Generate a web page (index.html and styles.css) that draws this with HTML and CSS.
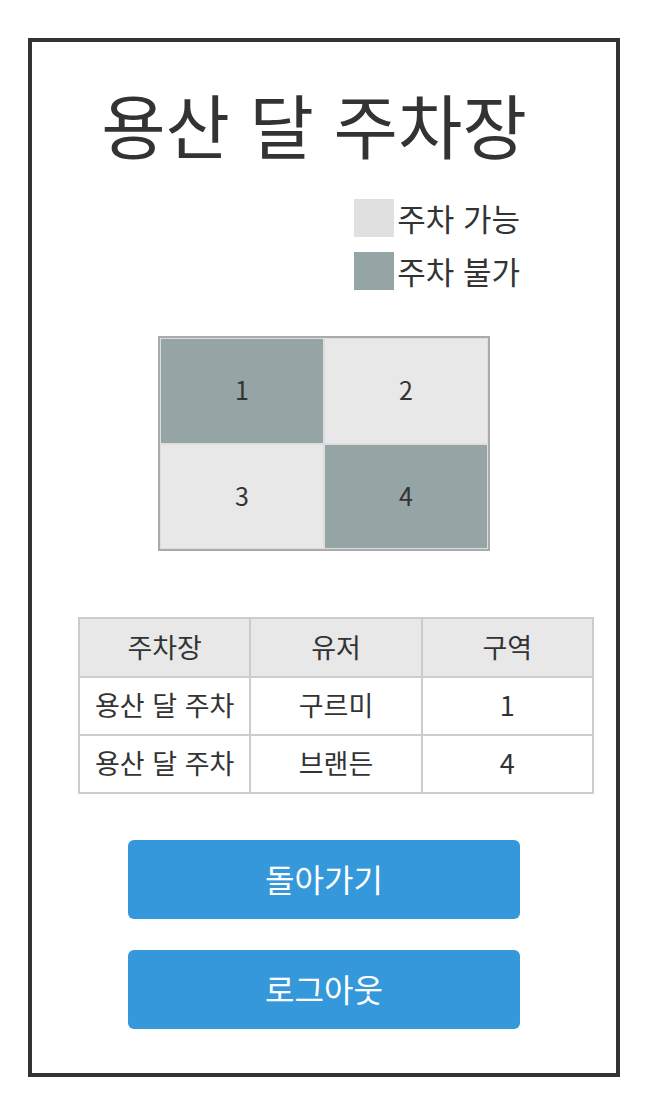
FILE: index.html
```html
<!DOCTYPE html>
<html lang="ko">
<head>
    <meta charset="UTF-8">
    <meta name="viewport" content="width=device-width, initial-scale=1.0">
    <title>용산 달 주차장</title>
    <link rel="stylesheet" href="styles.css">
</head>
<body>
    <div class="frame">
        <h1 class="title">용산 달 주차장</h1>

        <div class="legend">
            <div class="legend-item"><span class="swatch free"></span>주차 가능</div>
            <div class="legend-item"><span class="swatch taken"></span>주차 불가</div>
        </div>

        <div class="lot">
            <div class="spot taken">1</div>
            <div class="spot free">2</div>
            <div class="spot free">3</div>
            <div class="spot taken">4</div>
        </div>

        <table class="list">
            <thead>
                <tr><th>주차장</th><th>유저</th><th>구역</th></tr>
            </thead>
            <tbody>
                <tr><td>용산 달 주차</td><td>구르미</td><td>1</td></tr>
                <tr><td>용산 달 주차</td><td>브랜든</td><td>4</td></tr>
            </tbody>
        </table>

        <div class="actions">
            <button class="btn">돌아가기</button>
            <button class="btn">로그아웃</button>
        </div>
    </div>
</body>
</html>
```

FILE: styles.css
```css
body {
    margin: 0;
    font-family: "Noto Sans CJK KR", "Noto Sans", sans-serif;
    color: #333;
    background: #fff;
}
.frame {
    box-sizing: border-box;
    width: 592px;
    height: 1039px;
    margin: 38px 0 0 28px;
    border: 4px solid #333;
    display: flex;
    flex-direction: column;
}
.title {
    margin: 42px 20px 0 0;
    font-size: 70px;
    line-height: 80px;
    font-weight: 400;
    text-align: center;
}
.legend {
    margin-top: 35px;
    align-self: flex-end;
    margin-right: 96px;
    display: flex;
    flex-direction: column;
    gap: 15px;
}
.legend-item {
    display: flex;
    align-items: center;
    gap: 3px;
    font-size: 31px;
    line-height: 38px;
}
.swatch {
    width: 40px;
    height: 38px;
}
.free {
    background: #e8e8e8;
}
.swatch.free {
    background: #e0e0e0;
}
.taken {
    background: #95a5a6;
}
.lot {
    align-self: center;
    margin-top: 46px;
    display: grid;
    grid-template-columns: 162px 162px;
    grid-template-rows: 104px 103px;
    gap: 2px;
    padding: 1px;
    border: 2px solid #aaa;
    background: #ddd;
}
.spot {
    display: flex;
    align-items: center;
    justify-content: center;
    font-size: 25px;
    padding-bottom: 4px;
    box-sizing: border-box;
}
.list {
    margin: 66px 0 0 46px;
    width: 516px;
    border-collapse: collapse;
    font-size: 27px;
    text-align: center;
}
.list th,
.list td {
    border: 2px solid #ccc;
    font-weight: 400;
    width: 33.3%;
    padding: 0 0 3px;
}
.list th {
    height: 54px;
    background: #e8e8e8;
}
.list td {
    height: 53px;
}
.actions {
    margin-top: 46px;
    display: flex;
    flex-direction: column;
    align-items: center;
    gap: 31px;
}
.btn {
    width: 392px;
    height: 79px;
    border: none;
    border-radius: 6px;
    background: #3498db;
    color: #fff;
    font-family: inherit;
    font-size: 32px;
    padding-bottom: 4px;
    cursor: pointer;
}
```
